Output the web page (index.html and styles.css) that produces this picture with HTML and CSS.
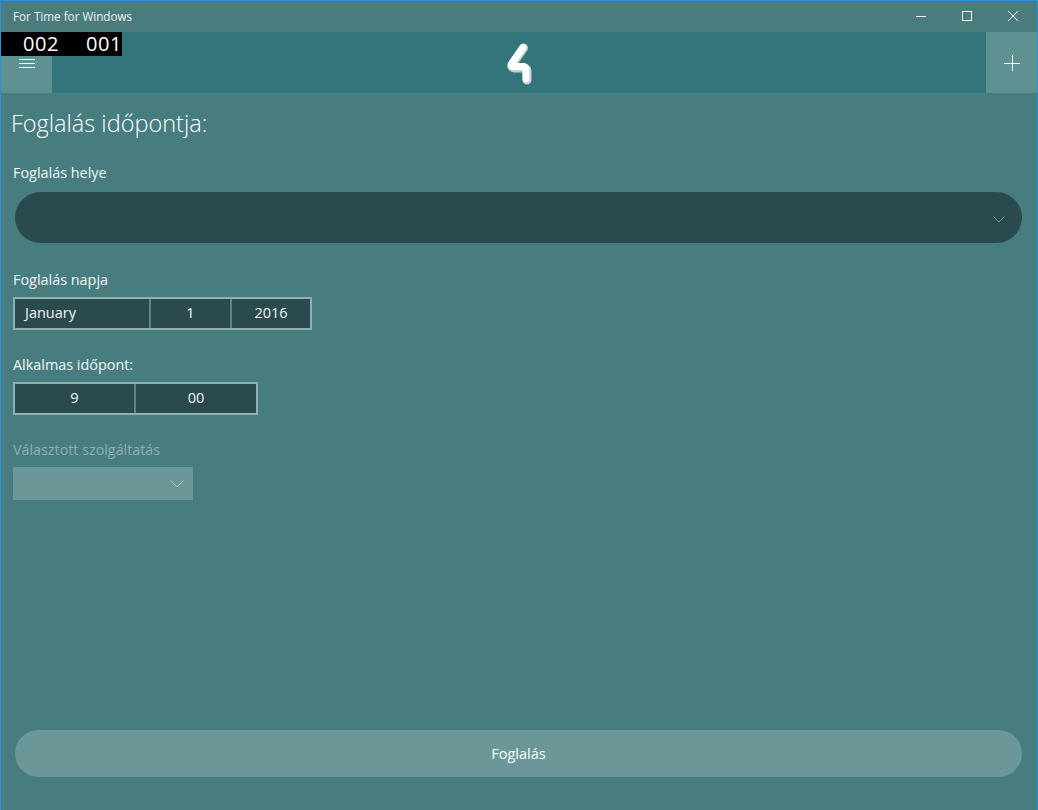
FILE: index.html
```html
<!DOCTYPE html>
<html lang="en">
<head>
    <meta charset="UTF-8">
    <title>For Time for Windows</title>
    <link rel="stylesheet" href="styles.css">
</head>
<body>
    <div class="window">
        <div class="titlebar">
            <span class="title">For Time for Windows</span>
            <div class="caption-buttons">
                <div class="caption-btn">
                    <svg width="12" height="12" viewBox="0 0 12 12"><path d="M1 6.5h10" stroke="#fff" fill="none"/></svg>
                </div>
                <div class="caption-btn">
                    <svg width="12" height="12" viewBox="0 0 12 12"><rect x="1.5" y="1.5" width="9" height="9" stroke="#fff" fill="none"/></svg>
                </div>
                <div class="caption-btn">
                    <svg width="12" height="12" viewBox="0 0 12 12"><path d="M1 1l10 10M11 1L1 11" stroke="#fff" fill="none"/></svg>
                </div>
            </div>
        </div>

        <div class="appbar">
            <div class="counter"><span>002</span><span>001</span></div>
            <div class="appbar-btn menu-btn">
                <svg width="16" height="12" viewBox="0 0 16 12"><path d="M0 1.5h16M0 5.5h16M0 9.5h16" stroke="#fff" fill="none"/></svg>
            </div>
            <div class="logo">
                <svg width="26" height="42" viewBox="0 0 26 42">
                    <path d="M17.5 5L6 21.5Q5 24.5 8 25H18Q21 25.5 21 28V37" stroke="#c3cfd0" stroke-width="9" stroke-linecap="round" stroke-linejoin="round" fill="none"/>
                    <path d="M17 4.5L5.5 21Q5 23.5 7.5 23.5H17.5Q20 24 20 27V36" stroke="#fff" stroke-width="7" stroke-linecap="round" stroke-linejoin="round" fill="none"/>
                </svg>
            </div>
            <div class="appbar-btn">
                <svg width="16" height="16" viewBox="0 0 16 16"><path d="M0 8.5h16M8.5 0v16" stroke="#fff" fill="none"/></svg>
            </div>
        </div>

        <div class="content">
            <h1 class="page-title">Foglalás időpontja:</h1>

            <label class="field-label label-place">Foglalás helye</label>
            <div class="combo combo-round">
                <svg width="12" height="7" viewBox="0 0 12 7"><path d="M.5.5L6 6 11.5.5" stroke="#6f9496" fill="none"/></svg>
            </div>

            <label class="field-label label-date">Foglalás napja</label>
            <div class="picker date-picker">
                <div class="picker-cell cell-left">January</div>
                <div class="picker-cell">1</div>
                <div class="picker-cell">2016</div>
            </div>

            <label class="field-label label-time">Alkalmas időpont:</label>
            <div class="picker time-picker">
                <div class="picker-cell">9</div>
                <div class="picker-cell">00</div>
            </div>

            <label class="field-label label-service">Választott szolgáltatás</label>
            <div class="combo combo-disabled">
                <svg width="14" height="8" viewBox="0 0 14 8"><path d="M.5.5L7 7 13.5.5" stroke="#a9c3c4" fill="none"/></svg>
            </div>

            <div class="submit-btn">Foglalás</div>
        </div>
    </div>
</body>
</html>
```

FILE: styles.css
```css
html, body {
    margin: 0;
    padding: 0;
}
body {
    font-family: "Open Sans", "Noto Sans", sans-serif;
    color: #fff;
    background: #477d7f;
}
.window {
    box-sizing: border-box;
    width: 1038px;
    height: 810px;
    border: 1px solid #2a8fdc;
    border-bottom-width: 0;
    display: flex;
    flex-direction: column;
    background: #477d7f;
}
.titlebar {
    height: 31px;
    flex: none;
    display: flex;
    align-items: center;
    justify-content: space-between;
    background: #4a7b7d;
}
.title {
    font-size: 11.7px;
    font-weight: 500;
    color: #eef3f3;
    margin-left: 12px;
    margin-top: -2px;
}
.caption-buttons {
    display: flex;
    margin-right: 1px;
}
.caption-btn {
    width: 46px;
    height: 31px;
    display: flex;
    align-items: center;
    justify-content: center;
    padding-bottom: 1px;
    box-sizing: border-box;
}
.appbar {
    position: relative;
    height: 61px;
    flex: none;
    display: flex;
    align-items: center;
    justify-content: space-between;
    background: #33757a;
}
.counter {
    position: absolute;
    left: 0;
    top: 0;
    width: 121px;
    height: 24px;
    box-sizing: border-box;
    padding: 0 0 1px 22px;
    display: flex;
    justify-content: space-between;
    align-items: center;
    background: #000;
    font-size: 20px;
    font-weight: 500;
    letter-spacing: 0.6px;
    line-height: 23px;
}
.appbar-btn {
    width: 51px;
    height: 61px;
    display: flex;
    align-items: center;
    justify-content: center;
    background: #5f9193;
}
.menu-btn {
    padding-top: 2px;
    box-sizing: border-box;
}
.logo {
    display: flex;
    padding-top: 2px;
}
.content {
    flex: 1;
    display: flex;
    flex-direction: column;
    align-items: flex-start;
    padding: 0 15px 33px 12px;
}
.page-title {
    margin: 14px 0 0 -2px;
    font-size: 23.5px;
    font-weight: 300;
    line-height: 32px;
    color: #fff;
}
.field-label {
    display: block;
    font-size: 14.4px;
    line-height: 20px;
    color: #f2f6f6;
}
.label-place {
    margin-top: 24px;
}
.label-date {
    margin-top: 27px;
}
.label-time {
    margin-top: 25px;
}
.label-service {
    margin-top: 25px;
    font-size: 14.3px;
    color: #8fb0b2;
}
.combo {
    display: flex;
    align-items: center;
    justify-content: flex-end;
    box-sizing: border-box;
}
.combo-round {
    align-self: stretch;
    margin: 9px 0 0 2px;
    height: 51px;
    padding: 3px 17px 0 0;
    border-radius: 26px;
    background: #2a4a4d;
}
.combo-disabled {
    width: 180px;
    height: 33px;
    margin-top: 7px;
    padding-right: 9px;
    background: #6b9799;
}
.picker {
    display: flex;
    box-sizing: border-box;
    height: 33px;
    margin-top: 7px;
    border: 2px solid #8fb0b2;
    background: #2a4a4d;
}
.date-picker {
    width: 299px;
}
.date-picker .picker-cell:nth-child(1) {
    width: 136px;
}
.date-picker .picker-cell:nth-child(2) {
    width: 81px;
}
.date-picker .picker-cell:nth-child(3) {
    flex: 1;
    border-right: none;
}
.time-picker {
    width: 245px;
}
.time-picker .picker-cell:nth-child(1) {
    width: 121px;
}
.time-picker .picker-cell:nth-child(2) {
    flex: 1;
    border-right: none;
}
.picker-cell {
    box-sizing: border-box;
    display: flex;
    align-items: center;
    justify-content: center;
    padding-bottom: 2px;
    font-size: 14.5px;
    color: #f2f6f6;
    border-right: 2px solid #5f8587;
}
.picker-cell.cell-left {
    justify-content: flex-start;
    padding-left: 10px;
}
.submit-btn {
    align-self: stretch;
    margin: auto 0 0 2px;
    height: 47px;
    display: flex;
    align-items: center;
    justify-content: center;
    border-radius: 24px;
    background: #6b9799;
    font-size: 14.5px;
    color: #fff;
}
```
